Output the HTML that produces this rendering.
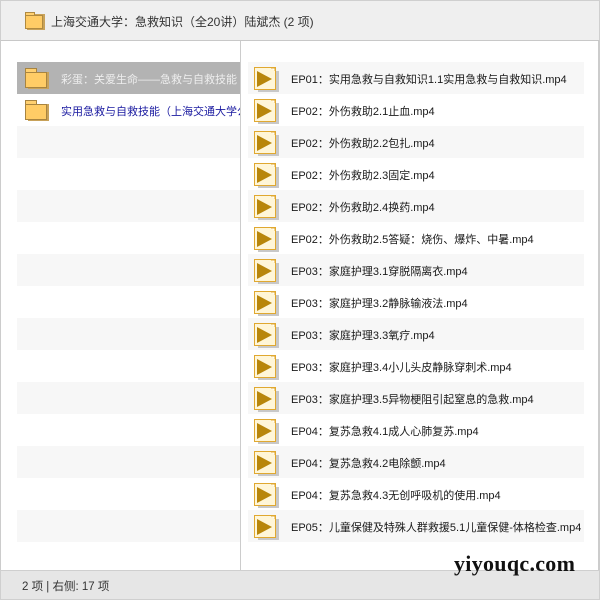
<!DOCTYPE html>
<html><head><meta charset="utf-8"><style>
*{margin:0;padding:0;box-sizing:border-box}
body{width:600px;height:600px;overflow:hidden;background:#fff;font-family:"Liberation Sans","Noto Sans CJK SC",sans-serif;font-size:11px;color:#1a1a1a;position:relative}
.hdr{position:absolute;left:0;top:0;width:600px;height:41px;background:#efefef;border:1px solid #cfcfcf;border-bottom:1px solid #c8c8c8}
.hdr svg{position:absolute;left:24px;top:11px}
.hdr span{position:absolute;left:50px;top:12px;font-size:12px;color:#333}
.rb{position:absolute;right:0;top:41px;width:2px;height:530px;background:#ccc}
.lb{position:absolute;left:0;top:41px;width:1px;height:530px;background:#ccc}
.div{position:absolute;left:240px;top:41px;width:1px;height:530px;background:#ccc}
.row{position:absolute;height:32px}
.l{left:17px;width:223px}
.r{left:248px;width:336px}
.a{background:#f7f7f7}
.sel{background:#b3b3b3;color:#eee}
.row svg{position:absolute;top:5px}
.l svg{left:8px}
.r svg{left:6px}
.row span{position:absolute;top:9px;white-space:nowrap;overflow:hidden}
.l span{left:44px;width:179px}
.r span{left:43px}
.ft{position:absolute;left:0;top:570px;width:600px;height:30px;background:#e6e6e6;border:1px solid #cfcfcf}
.ft span{position:absolute;left:21px;top:7px;font-size:11.5px;color:#333}
.wm{position:absolute;left:454px;top:551px;font-family:"Liberation Serif",serif;font-weight:bold;font-size:22px;color:#111;letter-spacing:0.3px}
</style></head><body>
<div class="hdr"><svg width="20" height="18" viewBox="0 0 20 18"><rect x="2" y="2" width="18" height="16" fill="#c8a25a"/><rect x="0.5" y="0.5" width="9" height="4" fill="#ffd070" stroke="#b08a40"/><rect x="0.5" y="3.5" width="17" height="13" fill="#ffcc66" stroke="#b08a40"/></svg><span>上海交通大学：急救知识（全20讲）陆斌杰 (2 项)</span></div>
<div class="lb"></div><div class="rb"></div><div class="div"></div>
<div id="c"></div>
<div class="ft"><span>2 项 | 右侧: 17 项</span></div>
<div class="wm">yiyouqc.com</div>
<script>
var folder='<svg width="24" height="22" viewBox="0 0 24 22"><rect x="3" y="5" width="21" height="17" fill="#c8a25a"/><rect x="0.5" y="1.5" width="11" height="5" fill="#ffd070" stroke="#a88440"/><rect x="0.5" y="5.5" width="21" height="15" fill="#ffcc66" stroke="#a88440"/></svg>';
var vid='<svg width="25" height="25" viewBox="0 0 25 25"><rect x="4" y="4" width="21" height="21" fill="#c8c8c8"/><rect x="0.5" y="0.5" width="21" height="22" fill="#fff6d8" stroke="#e0a830"/><path d="M17 1 L21 1 L21 4" fill="#fff" stroke="#e0a830"/><polygon points="3,4 3,20 18,12" fill="#b8860b"/></svg>';
var L=['彩蛋：关爱生命——急救与自救技能（上海交通大学公开课）','实用急救与自救技能（上海交通大学公开课）'];
var R=['EP01：实用急救与自救知识1.1实用急救与自救知识.mp4','EP02：外伤救助2.1止血.mp4','EP02：外伤救助2.2包扎.mp4','EP02：外伤救助2.3固定.mp4','EP02：外伤救助2.4换药.mp4','EP02：外伤救助2.5答疑：烧伤、爆炸、中暑.mp4','EP03：家庭护理3.1穿脱隔离衣.mp4','EP03：家庭护理3.2静脉输液法.mp4','EP03：家庭护理3.3氧疗.mp4','EP03：家庭护理3.4小儿头皮静脉穿刺术.mp4','EP03：家庭护理3.5异物梗阻引起窒息的急救.mp4','EP04：复苏急救4.1成人心肺复苏.mp4','EP04：复苏急救4.2电除颤.mp4','EP04：复苏急救4.3无创呼吸机的使用.mp4','EP05：儿童保健及特殊人群救援5.1儿童保健-体格检查.mp4'];
var h='';
for(var i=0;i<15;i++){var y=62+i*32;
var cls='row l'+(i==0?' sel':(i%2==0?' a':''));
h+='<div class="'+cls+'" style="top:'+y+'px">'+(i<2?folder+'<span'+(i==1?' style="color:#1a1aa0"':'')+'>'+L[i]+'</span>':'')+'</div>';
h+='<div class="row r'+(i%2==0?' a':'')+'" style="top:'+y+'px">'+vid+'<span>'+R[i]+'</span></div>';}
document.getElementById('c').innerHTML=h;
</script>
</body></html>
